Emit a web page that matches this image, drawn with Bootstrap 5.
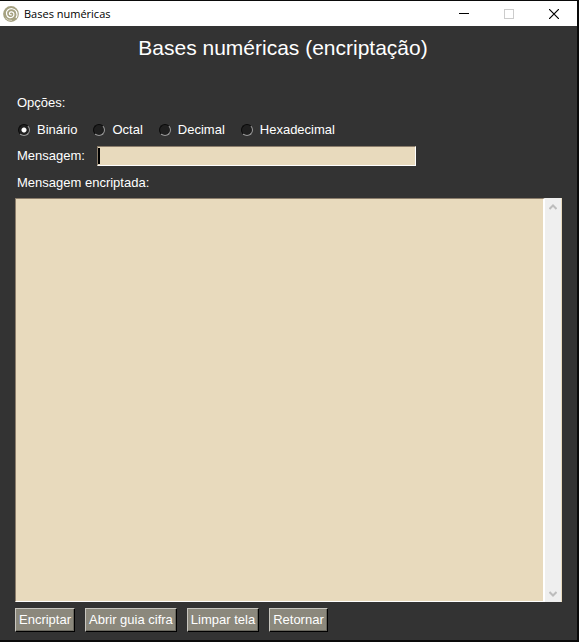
<!DOCTYPE html>
<html lang="pt-BR">
<head>
<meta charset="utf-8">
<meta name="viewport" content="width=device-width, initial-scale=1">
<title>Bases numéricas</title>
<link href="https://cdn.jsdelivr.net/npm/bootstrap@5.3.0/dist/css/bootstrap.min.css" rel="stylesheet">
<style>
  body { background: #000; font-family: "Liberation Sans", Arial, sans-serif; font-size: 13px; line-height: 16px; color: #fff; }
  .app-window { background: #333; border: solid #0a0a0a; border-width: 1px 2px 2px 0; }
  .title-bar { height: 25px; background: #fff; color: #000; font-family: "Open Sans", sans-serif; font-size: 11px; padding: 0 1px 0 3px; gap: 5px; }
  .title-bar button { width: 45px; height: 25px; border: 0; background: transparent; padding: 0; line-height: 0; }
  .app-body { padding: 10px 15px 8px; }
  h1 { font-size: 21px; line-height: 24px; padding-right: 11px; margin-bottom: 35px; font-weight: 400; }
  .line { min-height: 16px; padding-left: 2px; }
  .options { gap: 16px; padding-left: 3px; margin: 11px 0 8px; }
  .options label { gap: 7px; }
  .options input { appearance: none; margin: 0; width: 12px; height: 12px; border-radius: 50%; background: #202020; border: 1px solid; border-color: #0a0a0a #999 #999 #0a0a0a; }
  .options input:checked { background: radial-gradient(circle, #fff 0 2px, #202020 3px); }
  .entry { flex: 0 1 319px; min-width: 0; position: relative; }
  .sunken { background: #e8dabd; border: 1px solid; border-color: #8b7d6b #fff #fff #8b7d6b; border-radius: 0; outline: 0; color: #000; }
  .entry input { height: 20px; padding: 0 3px; caret-color: transparent; }
  .entry::before { content: ""; position: absolute; left: 1px; top: 2px; width: 2px; height: 16px; background: #000; }
  .output-label { margin: 9px 0 7px; }
  .output { min-height: 80px; }
  .output textarea { resize: none; border-right-width: 2px; padding: 2px; min-width: 0; }
  .scroll { width: 17px; background: #efefef; border-right: 1px solid #e8dabd; }
  .scroll button { border: 0; padding: 0; height: 17px; background: transparent; line-height: 0; }
  .actions { gap: 10px; margin-top: 6px; }
  .actions button { height: 24px; padding: 0 3px; background: #8b887c; color: #fff; border: 1px solid; border-color: #c8c6bf #000 #000 #c8c6bf; box-shadow: inset -1px -1px #68665d; line-height: 20px; }
</style>
<script src="https://cdn.jsdelivr.net/npm/bootstrap@5.3.0/dist/js/bootstrap.bundle.min.js"></script>
</head>
<body>
<div class="app-window vh-100 d-flex flex-column">
  <header class="title-bar d-flex align-items-center">
    <svg width="16" height="16" viewBox="0 0 16 16" aria-hidden="true">
      <circle cx="8" cy="8" r="7.9" fill="#a5a180"/>
      <path d="M8.6 8.6C7.2 9.300 6 8.200 6.500 6.900C7.300 5.200 10.400 5.600 10.900 7.900C11.300 10.700 8.400 12.400 6 11.400C3.200 10.200 2.700 6.300 4.700 4.200C7.200 1.800 11.500 2.300 13.300 5.300C14.400 7.500 14.200 10 13 12" fill="none" stroke="#fff" stroke-width="1.200"/>
      <path d="M2.500 12Q5.200 14.800 9 14.400" fill="none" stroke="#e2e0d3" stroke-width=".8"/>
    </svg>
    <span class="me-auto">Bases numéricas</span>
    <div class="d-flex">
      <button type="button" aria-label="Minimizar"><svg width="10" height="10"><path d="M0 4.500H10" stroke="#000"/></svg></button>
      <button type="button" aria-label="Maximizar" disabled><svg width="10" height="10"><rect x=".5" y=".5" width="9" height="9" fill="none" stroke="#ccc"/></svg></button>
      <button type="button" aria-label="Fechar"><svg width="10" height="10"><path d="M0 0L10 10M10 0L0 10" stroke="#000" stroke-width="1.200"/></svg></button>
    </div>
  </header>
  <main class="app-body flex-grow-1 d-flex flex-column">
    <h1 class="text-center">Bases numéricas (encriptação)</h1>
    <div class="line" id="opt-title">Opções:</div>
    <div class="options d-flex" role="radiogroup" aria-labelledby="opt-title">
      <label class="d-flex align-items-center"><input type="radio" name="base" checked>Binário</label>
      <label class="d-flex align-items-center"><input type="radio" name="base">Octal</label>
      <label class="d-flex align-items-center"><input type="radio" name="base">Decimal</label>
      <label class="d-flex align-items-center"><input type="radio" name="base">Hexadecimal</label>
    </div>
    <div class="line d-flex align-items-center gap-2">
      <label for="msg" class="pe-1">Mensagem:</label>
      <div class="entry"><input class="sunken w-100 d-block" id="msg" type="text"></div>
    </div>
    <label for="out" class="line output-label">Mensagem encriptada:</label>
    <div class="output flex-grow-1 d-flex">
      <textarea class="sunken flex-grow-1" id="out"></textarea>
      <div class="scroll d-flex flex-column justify-content-between">
        <button type="button" aria-label="Rolar para cima"><svg width="8" height="6"><path d="M.5 5L4 1.500L7.500 5" fill="none" stroke="#bdbdbd" stroke-width="2"/></svg></button>
        <button type="button" aria-label="Rolar para baixo"><svg width="8" height="6"><path d="M.5 1L4 4.500L7.500 1" fill="none" stroke="#bdbdbd" stroke-width="2"/></svg></button>
      </div>
    </div>
    <div class="actions d-flex flex-wrap">
      <button type="button">Encriptar</button>
      <button type="button">Abrir guia cifra</button>
      <button type="button">Limpar tela</button>
      <button type="button">Retornar</button>
    </div>
  </main>
</div>
</body>
</html>
